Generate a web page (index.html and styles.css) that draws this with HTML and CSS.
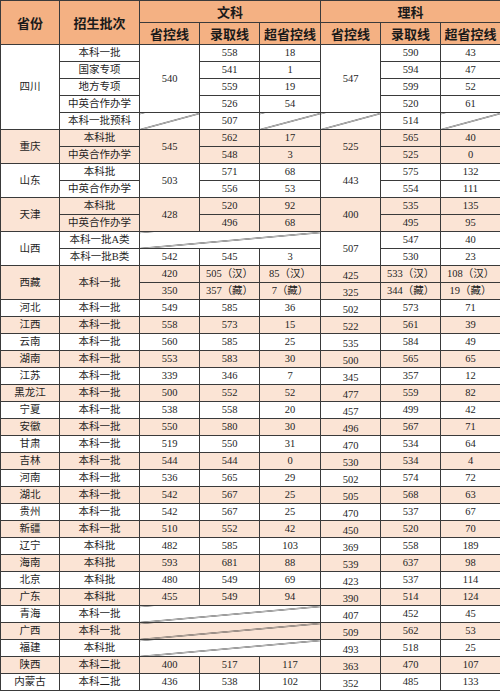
FILE: index.html
```html
<!DOCTYPE html>
<html lang="zh">
<head>
<meta charset="utf-8">
<link rel="stylesheet" href="styles.css">
</head>
<body>
<table class="t">
<colgroup>
<col class="c1"><col class="c2"><col class="c3"><col class="c3"><col class="c4"><col class="c3"><col class="c3"><col class="c3">
</colgroup>
<thead>
<tr class="h1"><th rowspan="2">省份</th><th rowspan="2">招生批次</th><th colspan="3">文科</th><th colspan="3">理科</th></tr>
<tr class="h2"><th>省控线</th><th>录取线</th><th>超省控线</th><th>省控线</th><th>录取线</th><th>超省控线</th></tr>
</thead>
<tbody>
<tr><td rowspan="5">四川</td><td>本科一批</td><td rowspan="4">540</td><td>558</td><td>18</td><td rowspan="4">547</td><td>590</td><td>43</td></tr>
<tr><td>国家专项</td><td>541</td><td>1</td><td>594</td><td>47</td></tr>
<tr><td>地方专项</td><td>559</td><td>19</td><td>599</td><td>52</td></tr>
<tr><td>中英合作办学</td><td>526</td><td>54</td><td>520</td><td>61</td></tr>
<tr><td>本科一批预科</td><td class="d"></td><td>507</td><td class="d"></td><td class="d"></td><td>514</td><td class="d"></td></tr>

<tr class="p"><td rowspan="2">重庆</td><td>本科批</td><td rowspan="2">545</td><td>562</td><td>17</td><td rowspan="2">525</td><td>565</td><td>40</td></tr>
<tr class="p"><td>中英合作办学</td><td>548</td><td>3</td><td>525</td><td>0</td></tr>

<tr><td rowspan="2">山东</td><td>本科批</td><td rowspan="2">503</td><td>571</td><td>68</td><td rowspan="2">443</td><td>575</td><td>132</td></tr>
<tr><td>中英合作办学</td><td>556</td><td>53</td><td>554</td><td>111</td></tr>

<tr class="p"><td rowspan="2">天津</td><td>本科批</td><td rowspan="2">428</td><td>520</td><td>92</td><td rowspan="2">400</td><td>535</td><td>135</td></tr>
<tr class="p"><td>中英合作办学</td><td>496</td><td>68</td><td>495</td><td>95</td></tr>

<tr><td rowspan="2">山西</td><td>本科一批A类</td><td colspan="3" class="d"></td><td rowspan="2">507</td><td>547</td><td>40</td></tr>
<tr><td>本科一批B类</td><td>542</td><td>545</td><td>3</td><td>530</td><td>23</td></tr>

<tr class="p"><td rowspan="2">西藏</td><td rowspan="2">本科一批</td><td>420</td><td>505（汉）</td><td>85（汉）</td><td class="lo">425</td><td>533（汉）</td><td>108（汉）</td></tr>
<tr class="p"><td>350</td><td>357（藏）</td><td>7（藏）</td><td class="lo">325</td><td>344（藏）</td><td>19（藏）</td></tr>

<tr><td>河北</td><td>本科一批</td><td>549</td><td>585</td><td>36</td><td class="lo">502</td><td>573</td><td>71</td></tr>
<tr class="p"><td>江西</td><td>本科一批</td><td>558</td><td>573</td><td>15</td><td class="lo">522</td><td>561</td><td>39</td></tr>
<tr><td>云南</td><td>本科一批</td><td>560</td><td>585</td><td>25</td><td class="lo">535</td><td>584</td><td>49</td></tr>
<tr class="p"><td>湖南</td><td>本科一批</td><td>553</td><td>583</td><td>30</td><td class="lo">500</td><td>565</td><td>65</td></tr>
<tr><td>江苏</td><td>本科一批</td><td>339</td><td>346</td><td>7</td><td class="lo">345</td><td>357</td><td>12</td></tr>
<tr class="p"><td>黑龙江</td><td>本科一批</td><td>500</td><td>552</td><td>52</td><td class="lo">477</td><td>559</td><td>82</td></tr>
<tr><td>宁夏</td><td>本科一批</td><td>538</td><td>558</td><td>20</td><td class="lo">457</td><td>499</td><td>42</td></tr>
<tr class="p"><td>安徽</td><td>本科一批</td><td>550</td><td>580</td><td>30</td><td class="lo">496</td><td>567</td><td>71</td></tr>
<tr><td>甘肃</td><td>本科一批</td><td>519</td><td>550</td><td>31</td><td class="lo">470</td><td>534</td><td>64</td></tr>
<tr class="p"><td>吉林</td><td>本科一批</td><td>544</td><td>544</td><td>0</td><td class="lo">530</td><td>534</td><td>4</td></tr>
<tr><td>河南</td><td>本科一批</td><td>536</td><td>565</td><td>29</td><td class="lo">502</td><td>574</td><td>72</td></tr>
<tr class="p"><td>湖北</td><td>本科一批</td><td>542</td><td>567</td><td>25</td><td class="lo">505</td><td>568</td><td>63</td></tr>
<tr><td>贵州</td><td>本科一批</td><td>542</td><td>567</td><td>25</td><td class="lo">470</td><td>537</td><td>67</td></tr>
<tr class="p"><td>新疆</td><td>本科一批</td><td>510</td><td>552</td><td>42</td><td class="lo">450</td><td>520</td><td>70</td></tr>
<tr><td>辽宁</td><td>本科批</td><td>482</td><td>585</td><td>103</td><td class="lo">369</td><td>558</td><td>189</td></tr>
<tr class="p"><td>海南</td><td>本科批</td><td>593</td><td>681</td><td>88</td><td class="lo">539</td><td>637</td><td>98</td></tr>
<tr><td>北京</td><td>本科批</td><td>480</td><td>549</td><td>69</td><td class="lo">423</td><td>537</td><td>114</td></tr>
<tr class="p"><td>广东</td><td>本科批</td><td>455</td><td>549</td><td>94</td><td class="lo">390</td><td>514</td><td>124</td></tr>
<tr><td>青海</td><td>本科一批</td><td colspan="3" class="d"></td><td class="lo">407</td><td>452</td><td>45</td></tr>
<tr class="p"><td>广西</td><td>本科一批</td><td colspan="3" class="d"></td><td class="lo">509</td><td>562</td><td>53</td></tr>
<tr><td>福建</td><td>本科批</td><td colspan="3" class="d"></td><td class="lo">493</td><td>518</td><td>25</td></tr>
<tr class="p"><td>陕西</td><td>本科二批</td><td>400</td><td>517</td><td>117</td><td class="lo">363</td><td>470</td><td>107</td></tr>
<tr><td>内蒙古</td><td>本科二批</td><td>436</td><td>538</td><td>102</td><td class="lo">352</td><td>485</td><td>133</td></tr>
</tbody>
</table>
</body>
</html>
```
FILE: styles.css
```css
html, body {
  margin: 0;
  padding: 0;
  background: #ffffff;
}
.t {
  width: 500px;
  border-collapse: collapse;
  table-layout: fixed;
  font-family: "Liberation Serif", "Noto Sans CJK SC", serif;
  font-size: 10.5px;
  color: #1e1e1e;
}
.c1 { width: 59px; }
.c2 { width: 80px; }
.c3 { width: 60px; }
.c4 { width: 61px; }
.t th, .t td {
  border: 1px solid #3a3a3a;
  padding: 0;
  text-align: center;
  vertical-align: middle;
  line-height: 14px;
  white-space: nowrap;
  overflow: hidden;
}
.t th {
  background: #f4b183;
  font-family: "Noto Sans CJK SC", sans-serif;
  font-weight: bold;
  font-size: 13px;
  color: #1a1a1a;
}
.h1 { height: 22px; }
.h2 { height: 22px; }
.t tbody tr { height: 17px; }
.t tbody tr.p { background: #fbe4d5; }
.lo { padding-top: 3px !important; line-height: 13px !important; }
.d {
  background-image: linear-gradient(to bottom right, transparent calc(50% - 0.7px), #3a3a3a calc(50% - 0.15px), #3a3a3a calc(50% + 0.15px), transparent calc(50% + 0.7px));
}
```
